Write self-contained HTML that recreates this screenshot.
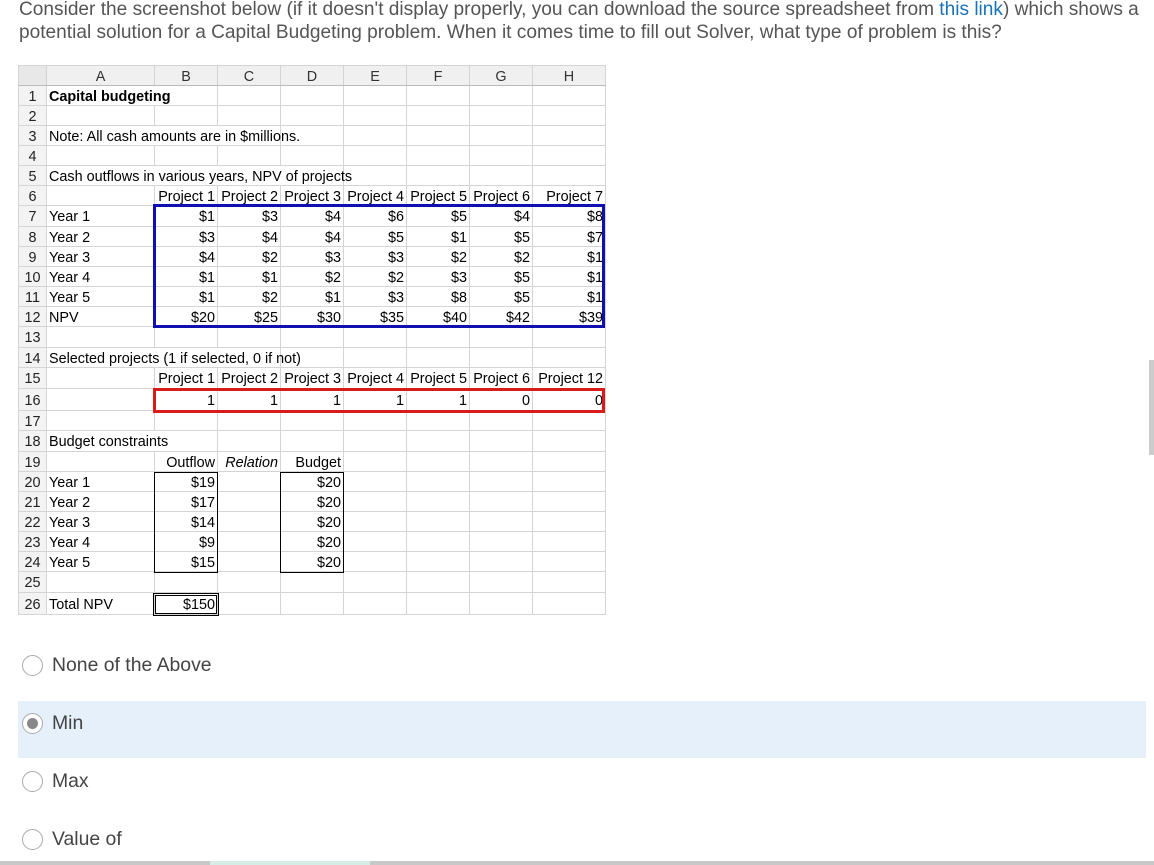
<!DOCTYPE html>
<html><head><meta charset="utf-8"><style>
body{margin:0;width:1154px;height:865px;background:#fff;position:relative;overflow:hidden;font-family:"Liberation Sans",Arial,sans-serif}
.q{position:absolute;left:19px;top:-2px;font-size:19.1px;line-height:23px;color:#555;width:1140px}
.q a{color:#1a73b8;text-decoration:none}
table{position:absolute;left:18px;top:65px;width:587px;border-collapse:collapse;table-layout:fixed;font-size:14.4px;color:#000}
td{border:1px solid #d4d4d4;padding:2px 2px 0 2px;white-space:nowrap;overflow:visible;line-height:14px}
td.n{background:#f3f3f3;color:#222;text-align:center;padding-left:0;padding-right:0}
tr.h td{background:#f0f0f0;text-align:center;color:#333;border-bottom:1px solid #bbb}
.r{text-align:right}
.box{position:absolute;box-sizing:border-box}
.opt{position:absolute;left:22px;font-size:19.4px;color:#444;display:flex;align-items:center}
.opt .c{width:21px;height:21px;border:1px solid #aaa;border-radius:50%;box-sizing:border-box;margin-right:9px;background:#fff;display:flex;align-items:center;justify-content:center}
</style></head><body>
<div class="q">Consider the screenshot below (if it doesn't display properly, you can download the source spreadsheet from <a>this link</a>) which shows a potential solution for a Capital Budgeting problem. When it comes time to fill out Solver, what type of problem is this?</div>
<table>
<colgroup><col style="width:28px"><col style="width:108px"><col style="width:63px"><col style="width:63px"><col style="width:63px"><col style="width:63px"><col style="width:63px"><col style="width:63px"><col style="width:73px"></colgroup>
<tr class="h" style="height:20px"><td style="background:#e8e8e8"></td><td>A</td><td>B</td><td>C</td><td>D</td><td>E</td><td>F</td><td>G</td><td>H</td></tr>
<tr style="height:20px"><td class="n">1</td><td colspan="2"><b>Capital budgeting</b></td><td></td><td></td><td></td><td></td><td></td><td></td></tr>
<tr style="height:20px"><td class="n">2</td><td></td><td></td><td></td><td></td><td></td><td></td><td></td><td></td></tr>
<tr style="height:20px"><td class="n">3</td><td colspan="3">Note: All cash amounts are in $millions.</td><td></td><td></td><td></td><td></td><td></td></tr>
<tr style="height:20px"><td class="n">4</td><td></td><td></td><td></td><td></td><td></td><td></td><td></td><td></td></tr>
<tr style="height:20px"><td class="n">5</td><td colspan="4">Cash outflows in various years, NPV of projects</td><td></td><td></td><td></td><td></td></tr>
<tr style="height:20px"><td class="n">6</td><td></td><td class="r">Project 1</td><td class="r">Project 2</td><td class="r">Project 3</td><td class="r">Project 4</td><td class="r">Project 5</td><td class="r">Project 6</td><td class="r">Project 7</td></tr>
<tr style="height:21px"><td class="n">7</td><td>Year 1</td><td class="r">$1</td><td class="r">$3</td><td class="r">$4</td><td class="r">$6</td><td class="r">$5</td><td class="r">$4</td><td class="r">$8</td></tr>
<tr style="height:20px"><td class="n">8</td><td>Year 2</td><td class="r">$3</td><td class="r">$4</td><td class="r">$4</td><td class="r">$5</td><td class="r">$1</td><td class="r">$5</td><td class="r">$7</td></tr>
<tr style="height:20px"><td class="n">9</td><td>Year 3</td><td class="r">$4</td><td class="r">$2</td><td class="r">$3</td><td class="r">$3</td><td class="r">$2</td><td class="r">$2</td><td class="r">$1</td></tr>
<tr style="height:20px"><td class="n">10</td><td>Year 4</td><td class="r">$1</td><td class="r">$1</td><td class="r">$2</td><td class="r">$2</td><td class="r">$3</td><td class="r">$5</td><td class="r">$1</td></tr>
<tr style="height:20px"><td class="n">11</td><td>Year 5</td><td class="r">$1</td><td class="r">$2</td><td class="r">$1</td><td class="r">$3</td><td class="r">$8</td><td class="r">$5</td><td class="r">$1</td></tr>
<tr style="height:20px"><td class="n">12</td><td>NPV</td><td class="r">$20</td><td class="r">$25</td><td class="r">$30</td><td class="r">$35</td><td class="r">$40</td><td class="r">$42</td><td class="r">$39</td></tr>
<tr style="height:21px"><td class="n">13</td><td></td><td></td><td></td><td></td><td></td><td></td><td></td><td></td></tr>
<tr style="height:20px"><td class="n">14</td><td colspan="3">Selected projects (1 if selected, 0 if not)</td><td></td><td></td><td></td><td></td><td></td></tr>
<tr style="height:21px"><td class="n">15</td><td></td><td class="r">Project 1</td><td class="r">Project 2</td><td class="r">Project 3</td><td class="r">Project 4</td><td class="r">Project 5</td><td class="r">Project 6</td><td class="r">Project 12</td></tr>
<tr style="height:22px"><td class="n">16</td><td></td><td class="r">1</td><td class="r">1</td><td class="r">1</td><td class="r">1</td><td class="r">1</td><td class="r">0</td><td class="r">0</td></tr>
<tr style="height:20px"><td class="n">17</td><td></td><td></td><td></td><td></td><td></td><td></td><td></td><td></td></tr>
<tr style="height:21px"><td class="n">18</td><td colspan="2">Budget constraints</td><td></td><td></td><td></td><td></td><td></td><td></td></tr>
<tr style="height:20px"><td class="n">19</td><td></td><td class="r">Outflow</td><td class="r"><i>Relation</i></td><td class="r">Budget</td><td></td><td></td><td></td><td></td></tr>
<tr style="height:20px"><td class="n">20</td><td>Year 1</td><td class="r">$19</td><td></td><td class="r">$20</td><td></td><td></td><td></td><td></td></tr>
<tr style="height:20px"><td class="n">21</td><td>Year 2</td><td class="r">$17</td><td></td><td class="r">$20</td><td></td><td></td><td></td><td></td></tr>
<tr style="height:20px"><td class="n">22</td><td>Year 3</td><td class="r">$14</td><td></td><td class="r">$20</td><td></td><td></td><td></td><td></td></tr>
<tr style="height:20px"><td class="n">23</td><td>Year 4</td><td class="r">$9</td><td></td><td class="r">$20</td><td></td><td></td><td></td><td></td></tr>
<tr style="height:20px"><td class="n">24</td><td>Year 5</td><td class="r">$15</td><td></td><td class="r">$20</td><td></td><td></td><td></td><td></td></tr>
<tr style="height:21px"><td class="n">25</td><td></td><td></td><td></td><td></td><td></td><td></td><td></td><td></td></tr>
<tr style="height:22px"><td class="n">26</td><td>Total NPV</td><td class="r">$150</td><td></td><td></td><td></td><td></td><td></td><td></td></tr>
</table>
<div class="box" style="left:153px;top:204px;width:452px;height:124px;border:3px solid #1010b0"></div>
<div class="box" style="left:153px;top:388px;width:452px;height:25px;border:3px solid #d81c1c"></div>
<div class="box" style="left:154px;top:472px;width:64px;height:101px;border:1px solid #000"></div>
<div class="box" style="left:280px;top:472px;width:64px;height:101px;border:1px solid #000"></div>
<div class="box" style="left:153px;top:593px;width:66px;height:23px;border:3px double #000"></div>
<div style="position:absolute;left:18px;top:701px;width:1128px;height:57px;background:#e6f0fa"></div>
<div class="opt" style="top:654px"><span class="c"></span>None of the Above</div>
<div class="opt" style="top:712px"><span class="c"><span style="width:11px;height:11px;border-radius:50%;background:#888"></span></span>Min</div>
<div class="opt" style="top:770px"><span class="c"></span>Max</div>
<div class="opt" style="top:828px"><span class="c"></span>Value of</div>
<div style="position:absolute;left:1149px;top:360px;width:5px;height:95px;background:#ccc"></div>
<div style="position:absolute;left:0;top:861px;width:1154px;height:4px;background:#c8c8c8"></div>
<div style="position:absolute;left:210px;top:861px;width:160px;height:4px;background:#d6ece6"></div>
</body></html>
